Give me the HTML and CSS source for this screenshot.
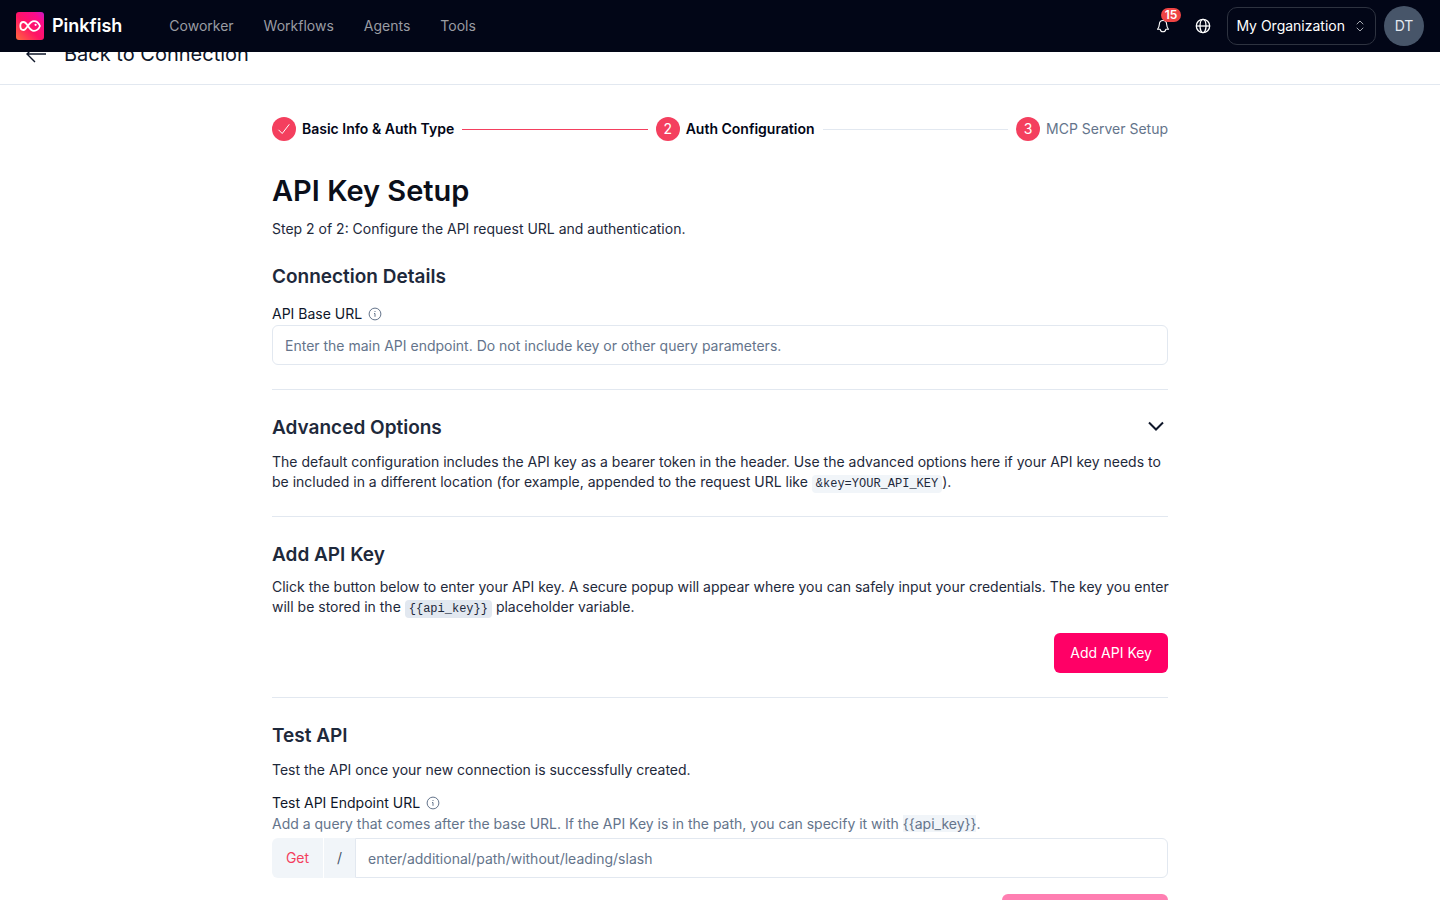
FILE: index.html
```html
<!DOCTYPE html>
<html lang="en">
<head>
<meta charset="UTF-8">
<title>Pinkfish - API Key Setup</title>
<meta name="viewport" content="width=device-width, initial-scale=1.0">
<link rel="stylesheet" href="styles.css">
</head>

<body>

<header class="topbar">
  <a class="brand" href="#">
    <svg class="logo" width="28" height="28" viewBox="0 0 28 28" aria-hidden="true">
      <defs>
        <linearGradient id="pink" x1="0" y1="1" x2="1" y2="0">
          <stop offset="0" stop-color="#ff6a3d"/>
          <stop offset=".45" stop-color="#ff1464"/>
          <stop offset=".8" stop-color="#fb0c8c"/>
          <stop offset="1" stop-color="#c81ac8"/>
        </linearGradient>
      </defs>
      <rect width="28" height="28" rx="3" fill="url(#pink)"/>
      <path d="M12 14C10.500 11.600 9 10 7.400 10 5.600 10 4.300 11.700 4.300 14s1.300 4 3.100 4c3.600 0 5.300-8.900 10.600-8.900 3 0 4.900 2.300 6 4.900-1.100 2.600-3 4.900-6 4.900-2.800 0-4.600-2.600-6-4.900z" fill="none" stroke="#fff" stroke-width="1.800" stroke-linejoin="round"/>
      <circle cx="19.600" cy="12.800" r="1.100" fill="#fff"/>
    </svg>
    <span>Pinkfish</span>
  </a>
  <nav class="nav">
    <a href="#">Coworker</a>
    <a href="#">Workflows</a>
    <a href="#">Agents</a>
    <a href="#">Tools</a>
  </nav>
  <div class="tools">
    <button class="icon-btn bell" aria-label="Notifications">
      <svg width="16" height="16" viewBox="0 0 16 16" fill="none" stroke="currentColor" stroke-width="1.100" stroke-linejoin="round" stroke-linecap="round">
        <path d="M8 2.500C5.900 2.500 4.500 4 4.400 6 4.300 8.400 3.800 9.600 2.500 11.300h2.700M8 2.500c2.100 0 3.500 1.500 3.600 3.500.1 2.400.6 3.600 1.900 5.300h-2.700M5.200 11.300c.3 1.700 1.400 2.500 2.800 2.500s2.500-.8 2.800-2.500"/>
      </svg>
      <span class="badge">15</span>
    </button>
    <button class="icon-btn" aria-label="Language">
      <svg width="16" height="16" viewBox="0 0 16 16" fill="none" stroke="currentColor" stroke-width="1.300">
        <circle cx="8" cy="8" r="6.700"/>
        <ellipse cx="8" cy="8" rx="3" ry="6.700"/>
        <path d="M1.300 8h13.400"/>
      </svg>
    </button>
    <button class="org">
      <span>My Organization</span>
      <svg width="14" height="14" viewBox="0 0 14 14" fill="none" stroke="currentColor" stroke-width="1" stroke-linecap="round" stroke-linejoin="round">
        <path d="M4 5l3-3 3 3M4 9l3 3 3-3"/>
      </svg>
    </button>
    <button class="avatar">DT</button>
  </div>
</header>

<div class="backbar">
  <a href="#">
    <svg width="24" height="24" viewBox="0 0 24 24" fill="none" stroke="currentColor" stroke-width="1.400">
      <path d="M22 12H3M11 4l-8 8 8 8"/>
    </svg>
    <span>Back to Connection</span>
  </a>
</div>

<main class="page">
  <ol class="steps">
    <li class="step done">
      <span class="dot">
        <svg width="14" height="14" viewBox="0 0 14 14" fill="none" stroke="currentColor" stroke-width="1">
          <path d="M1.500 7.800l3.700 3.700L12.300 2.300"/>
        </svg>
      </span>
      <span>Basic Info &amp; Auth Type</span>
    </li>
    <li class="line filled" aria-hidden="true"></li>
    <li class="step current"><span class="dot">2</span><span>Auth Configuration</span></li>
    <li class="line" aria-hidden="true"></li>
    <li class="step"><span class="dot">3</span><span>MCP Server Setup</span></li>
  </ol>

  <h1>API Key Setup</h1>
  <p>Step 2 of 2: Configure the API request URL and authentication.</p>

  <section class="section first">
    <h2>Connection Details</h2>
    <div class="field-label">
      <label for="baseUrl">API Base URL</label>
      <svg class="info" width="14" height="14" viewBox="0 0 14 14" fill="none" stroke="currentColor">
        <circle cx="7" cy="7" r="5.900"/>
        <path d="M6 6.500h1v3.300M7 4v1"/>
      </svg>
    </div>
    <input class="input" id="baseUrl" type="text" placeholder="Enter the main API endpoint. Do not include key or other query parameters.">
  </section>

  <section class="section">
    <div class="section-head">
      <h2>Advanced Options</h2>
      <button class="toggle" aria-label="Show advanced options">
        <svg width="24" height="24" viewBox="0 0 24 24" fill="none" stroke="currentColor" stroke-width="2">
          <path d="M5 8.500l7 7 7-7"/>
        </svg>
      </button>
    </div>
    <p>The default configuration includes the API key as a bearer token in the header. Use the advanced options here if your API key needs to be included in a different location (for example, appended to the request URL like <code>&amp;key=YOUR_API_KEY</code>).</p>
  </section>

  <section class="section key">
    <h2>Add API Key</h2>
    <p>Click the button below to enter your API key. A secure popup will appear where you can safely input your credentials. The key you enter will be stored in the <code class="dark">{{api_key}}</code> placeholder variable.</p>
    <div class="actions">
      <button class="btn">Add API Key</button>
    </div>
  </section>

  <section class="section">
    <h2>Test API</h2>
    <p>Test the API once your new connection is successfully created.</p>
    <div class="field-label">
      <label for="testUrl">Test API Endpoint URL</label>
      <svg class="info" width="14" height="14" viewBox="0 0 14 14" fill="none" stroke="currentColor">
        <circle cx="7" cy="7" r="5.900"/>
        <path d="M6 6.500h1v3.300M7 4v1"/>
      </svg>
    </div>
    <p class="help">Add a query that comes after the base URL. If the API Key is in the path, you can specify it with <span class="var">{{api_key}}</span>.</p>
    <div class="url-row">
      <button class="method">Get</button>
      <span class="slash">/</span>
      <input class="input" id="testUrl" type="text" placeholder="enter/additional/path/without/leading/slash">
    </div>
    <div class="actions">
      <button class="btn" disabled>Test API Connection</button>
    </div>
  </section>
</main>

</body>
</html>
```

FILE: styles.css
```css
*{box-sizing:border-box}
html{scrollbar-width:none}
body{margin:0;font:14px/20px Inter,"Liberation Sans",sans-serif;color:#1e293b;background:#fff}
h1,h2,p,ol{margin:0;padding:0}
a{color:inherit;text-decoration:none}
button,input{font:inherit;color:inherit}
button{border:0;background:none;padding:0;cursor:pointer}
svg{display:block;flex:none}

.topbar{
 position:fixed;top:0;left:0;right:0;z-index:10;height:52px;padding:0 16px;
 display:flex;align-items:center;background:#020617;color:#fff
}
.brand{display:flex;align-items:center;gap:8px;font-size:18px;line-height:28px;font-weight:600}
.nav{display:flex;gap:30px;margin-left:47px;color:#9a9ca3}
.tools{display:flex;align-items:center;margin-left:auto;gap:8px}
.icon-btn{width:32px;height:32px;display:flex;align-items:center;justify-content:center;position:relative}
.badge{
 position:absolute;top:-2px;right:-2px;padding:0 4px;border-radius:8px;
 background:#ef4444;font-size:12px;line-height:14px;font-weight:600
}
.org{
 display:flex;align-items:center;gap:8px;height:38px;padding:0 8px;
 border:1px solid #2e3340;border-radius:10px
}
.org svg{color:#a5a8b0}
.avatar{width:40px;height:40px;border-radius:50%;background:#475569;color:#e2e8f0}

.backbar{margin-top:24px;height:61px;padding:0 24px;border-bottom:1px solid #e2e8f0;display:flex;align-items:center;color:#0f172a}
.backbar a{display:flex;align-items:center;gap:16px;font-size:20px;line-height:28px}

.page{max-width:944px;margin:0 auto;padding:32px 24px}
.steps{display:flex;align-items:center;gap:8px;list-style:none;margin-bottom:32px}
.step{display:flex;align-items:center;gap:6px;color:#64748b}
.step.done,.step.current{color:#020617;font-weight:600}
.dot{
 width:24px;height:24px;border-radius:50%;background:#f43f5e;color:#fff;
 display:flex;align-items:center;justify-content:center;font-weight:400
}
.line{flex:1;height:1px;background:#e2e8f0}
.line.filled{background:#f43f5e}

h1{font-size:29px;line-height:36px;font-weight:600;color:#0b0f1a;margin-bottom:10px}
h2{font-size:19px;line-height:28px;font-weight:600;margin-bottom:10px}
.section{border-top:1px solid #e2e8f0;padding:24px 0}
.section.first{border:0}
.section.key h2{margin-bottom:8px}
.section.key p{margin-right:-8px}
.section-head{display:flex;justify-content:space-between}
.toggle{height:24px;color:#0f172a}

.field-label{display:flex;align-items:center;gap:6px;margin-top:13px;color:#0f172a}
.info{color:#64748b}
.input{
 width:100%;height:40px;padding:0 12px;border:1px solid #e2e8f0;border-radius:6px;
 background:#fff;display:block;margin-top:1px
}
.input::placeholder{color:#64748b;opacity:1}
code{
 font:12px/16px "Liberation Mono",monospace;padding:2px 4px;border-radius:4px;background:#f1f5f9
}
code.dark{background:#e2e8f0}
.help{color:#64748b;margin:1px 0 4px}
.var{background:#f1f5f9}

.url-row{display:flex}
.method,.slash{height:40px;background:#f1f5f9;display:flex;align-items:center;justify-content:center}
.method{width:51px;border-radius:6px 0 0 6px;color:#f43f5e}
.slash{width:32px;border-left:1px solid #fff;color:#475569}
.url-row .input{flex:1;margin:0;border-radius:0 6px 6px 0}

.actions{display:flex;justify-content:flex-end;margin-top:16px}
.btn{height:40px;padding:0 16px;border-radius:6px;background:#ff0066;color:#fff}
.btn:disabled{opacity:.5}
```
